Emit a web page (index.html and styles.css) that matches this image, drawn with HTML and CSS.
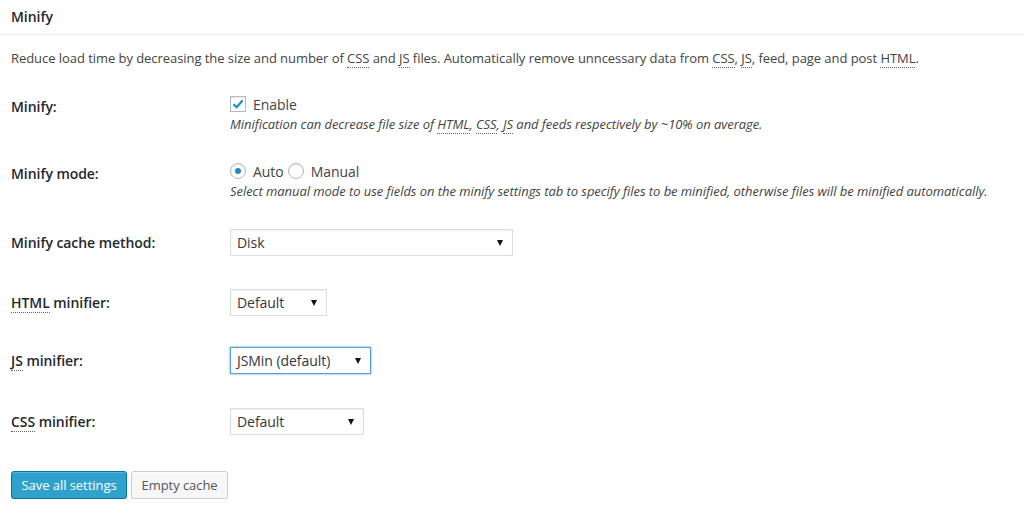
FILE: index.html
```html
<!DOCTYPE html>
<html>
<head>
<meta charset="utf-8">
<link rel="stylesheet" href="styles.css">
</head>
<body>
<div class="postbox">
  <h3 class="hndle">Minify</h3>
  <div class="inside">
    <p class="intro">Reduce load time by decreasing the size and number of <abbr>CSS</abbr> and <abbr>JS</abbr> files. Automatically remove unncessary data from <abbr>CSS</abbr>, <abbr>JS</abbr>, feed, page and post <abbr>HTML</abbr>.</p>
    <div class="form">
      <div class="row r-enable">
        <div class="label">Minify:</div>
        <div class="field">
          <div class="line"><span class="check"><svg viewBox="0 0 16 16" width="16" height="16"><path d="M3.5 8.2 L6.6 11.2 L12.6 4.4" fill="none" stroke="#1e8cbe" stroke-width="2.2"/></svg></span><span class="opt">Enable</span></div>
          <div class="desc">Minification can decrease file size of <abbr>HTML</abbr>, <abbr>CSS</abbr>, <abbr>JS</abbr> and feeds respectively by ~10% on average.</div>
        </div>
      </div>
      <div class="row r-mode">
        <div class="label">Minify mode:</div>
        <div class="field">
          <div class="line"><span class="radio on"></span><span class="opt">Auto</span><span class="radio"></span><span class="opt">Manual</span></div>
          <div class="desc">Select manual mode to use fields on the minify settings tab to specify files to be minified, otherwise files will be minified automatically.</div>
        </div>
      </div>
      <div class="row sel r-cache">
        <div class="label">Minify cache method:</div>
        <div class="field"><span class="select w-disk">Disk</span></div>
      </div>
      <div class="row sel r-html">
        <div class="label"><abbr>HTML</abbr> minifier:</div>
        <div class="field"><span class="select w-html">Default</span></div>
      </div>
      <div class="row sel r-js">
        <div class="label"><abbr>JS</abbr> minifier:</div>
        <div class="field"><span class="select w-js focus">JSMin (default)</span></div>
      </div>
      <div class="row sel r-css">
        <div class="label"><abbr>CSS</abbr> minifier:</div>
        <div class="field"><span class="select w-css">Default</span></div>
      </div>
    </div>
    <div class="buttons">
      <button class="btn primary">Save all settings</button>
      <button class="btn">Empty cache</button>
    </div>
  </div>
</div>
</body>
</html>
```
FILE: styles.css
```css
html, body {
  margin: 0;
  padding: 0;
  background: #fff;
}
body {
  font-family: "Open Sans", "Liberation Sans", sans-serif;
  font-size: 13px;
  color: #444;
  letter-spacing: -0.055px;
}
abbr {
  text-decoration: none;
  border-bottom: 1px dotted #666;
}
.hndle {
  margin: 0;
  font-size: 14px;
  font-weight: 600;
  color: #23282d;
  line-height: 20px;
  padding: 7px 11px 7px;
  border-bottom: 1px solid #eee;
}
.inside {
  padding: 0 11px;
}
.intro {
  margin: 13px 0 0;
  line-height: 20px;
  color: #444;
}
.form {
  display: flex;
  flex-direction: column;
  margin-top: 26px;
}
.row {
  display: flex;
  align-items: flex-start;
}
.r-enable { margin-bottom: 28px; }
.r-mode { margin-bottom: 29px; }
.r-cache { margin-bottom: 33px; }
.r-html { margin-bottom: 31px; }
.r-js { margin-bottom: 34px; }
.label {
  width: 219px;
  flex: none;
  font-size: 14px;
  font-weight: 600;
  color: #23282d;
  line-height: 24px;
  padding-top: 1px;
}
.row.sel .label {
  line-height: 27px;
  padding-top: 0;
}
.field {
  flex: 1;
}
.line {
  display: flex;
  align-items: center;
  height: 20px;
  font-size: 14px;
  color: #444;
}
.opt {
  margin-left: 7px;
}
.check {
  width: 16px;
  height: 16px;
  box-sizing: border-box;
  border: 1px solid #b4b9be;
  background: #fff;
  box-shadow: inset 0 1px 2px rgba(0,0,0,.1);
  display: inline-flex;
  align-items: center;
  justify-content: center;
}
.check svg {
  flex: none;
}
.radio {
  width: 16px;
  height: 16px;
  box-sizing: border-box;
  border: 1px solid #b4b9be;
  border-radius: 50%;
  background: #fff;
  box-shadow: inset 0 1px 2px rgba(0,0,0,.1);
  display: inline-flex;
  align-items: center;
  justify-content: center;
}
.opt + .radio {
  margin-left: 4px;
}
.radio.on::before {
  content: "";
  width: 6px;
  height: 6px;
  border-radius: 50%;
  background: #1e8cbe;
}
.desc {
  font-style: italic;
  font-size: 13px;
  color: #444;
  line-height: 18px;
  margin-top: 1px;
}
.select {
  display: inline-flex;
  align-items: center;
  box-sizing: border-box;
  height: 27px;
  padding: 0 6px;
  border: 1px solid #ddd;
  background: #fff;
  box-shadow: inset 0 1px 2px rgba(0,0,0,.07);
  font-size: 14px;
  color: #32373c;
  position: relative;
}
.select::after {
  content: "";
  position: absolute;
  right: 9px;
  top: 10px;
  border-left: 3.5px solid transparent;
  border-right: 3.5px solid transparent;
  border-top: 6px solid #111;
}
.w-disk { width: 283px; }
.w-html { width: 97px; }
.w-js { width: 141px; }
.w-css { width: 134px; }
.select.focus {
  border-color: #5b9dd9;
  box-shadow: 0 0 2px rgba(30,140,190,.8);
}
.buttons {
  display: flex;
  gap: 4px;
  margin-top: 36px;
}
.btn {
  font-family: "Open Sans", "Liberation Sans", sans-serif;
  font-size: 13px;
  letter-spacing: -0.055px;
  height: 28px;
  padding: 0 9.5px;
  border: 1px solid #ccc;
  border-radius: 3px;
  background: #f7f7f7;
  color: #555;
  box-shadow: inset 0 1px 0 #fff, 0 1px 0 rgba(0,0,0,.08);
  line-height: 26px;
}
.btn.primary {
  background: #2ea2cc;
  border-color: #0074a2;
  color: #fff;
  box-shadow: inset 0 1px 0 rgba(120,200,230,.5), 0 1px 0 rgba(0,0,0,.15);
}
```
